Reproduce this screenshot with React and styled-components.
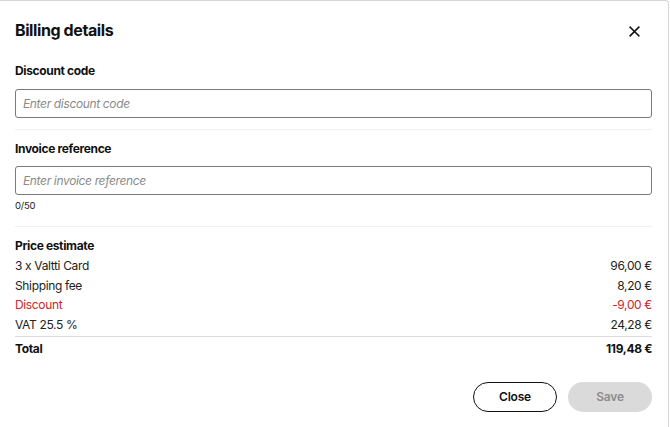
import React, { useState } from 'react';
import styled, { createGlobalStyle } from 'styled-components';

const GlobalStyle = createGlobalStyle`
    html, body {
        margin: 0;
        padding: 0;
        background: #ffffff;
    }
    body {
        font-family: Inter, "Noto Sans", sans-serif;
        color: #111111;
        letter-spacing: -0.35px;
    }
`;

const Dialog = styled.div`
    box-sizing: border-box;
    width: 669px;
    height: 427px;
    background: #ffffff;
    border-top: 1px solid #d4d4d4;
    border-right: 1px solid #d4d4d4;
    border-top-right-radius: 4px;
    padding: 19px 16px 0 15px;
    display: flex;
    flex-direction: column;
`;

const Header = styled.div`
    display: flex;
    justify-content: space-between;
    align-items: center;
    height: 20px;
`;

const Title = styled.h2`
    margin: 0;
    font-size: 16px;
    line-height: 20px;
    font-weight: 700;
    letter-spacing: -0.4px;
`;

const CloseIcon = styled.button`
    border: none;
    background: none;
    padding: 0;
    margin-right: 12px;
    margin-top: 2px;
    width: 11px;
    height: 11px;
    display: flex;
    cursor: pointer;
`;

const Field = styled.div`
    display: flex;
    flex-direction: column;
    margin-top: ${({ top }) => top}px;
`;

const Label = styled.label`
    font-size: 12px;
    line-height: 16px;
    font-weight: 700;
    margin-bottom: ${({ gap }) => gap}px;
`;

const Input = styled.input`
    box-sizing: border-box;
    width: 100%;
    height: 29px;
    border: 1px solid #7a7a7a;
    border-radius: 3px;
    padding: 0 7px;
    font-family: inherit;
    font-size: 12px;
    letter-spacing: -0.35px;
    color: #111;
    outline: none;
    &::placeholder {
        color: #8a8a8a;
        font-style: italic;
    }
`;

const Counter = styled.div`
    font-size: 9.5px;
    line-height: 14px;
    margin-top: 4px;
    letter-spacing: -0.2px;
    color: #222;
`;

const Divider = styled.hr`
    border: none;
    border-top: 1px solid ${({ strong }) => strong ? '#dcdcdc' : '#f0f0f0'};
    margin: ${({ top }) => top}px 0 0 0;
`;

const SectionTitle = styled.div`
    font-size: 12px;
    font-weight: 700;
    line-height: 16px;
    margin-top: 11px;
    margin-bottom: 2px;
`;

const Row = styled.div`
    display: flex;
    justify-content: space-between;
    font-size: 12px;
    line-height: 19.6px;
    color: ${({ red }) => red ? '#d2232a' : '#222'};
    font-weight: ${({ bold }) => bold ? 700 : 400};
`;

const TotalRow = styled(Row)`
    margin-top: 2px;
    color: #111;
`;

const Footer = styled.div`
    display: flex;
    justify-content: flex-end;
    gap: 11px;
    margin-top: 23px;
`;

const Button = styled.button`
    box-sizing: border-box;
    width: 84px;
    height: 30px;
    border-radius: 15px;
    font-family: inherit;
    font-size: 12px;
    font-weight: 600;
    letter-spacing: -0.2px;
    border: ${({ primary }) => primary ? 'none' : '1px solid #111'};
    background: ${({ primary }) => primary ? '#dadada' : '#ffffff'};
    color: ${({ primary }) => primary ? '#8c8c8c' : '#111'};
    cursor: ${({ disabled }) => disabled ? 'not-allowed' : 'pointer'};
`;

const lines = [
    { label: '3 x Valtti Card', value: '96,00 €' },
    { label: 'Shipping fee', value: '8,20 €' },
    { label: 'Discount', value: '-9,00 €', red: true },
    { label: 'VAT 25.5 %', value: '24,28 €' },
];

const App = () => {
    const [discount, setDiscount] = useState('');
    const [reference, setReference] = useState('');

    return (
        <>
            <GlobalStyle />
            <Dialog>
                <Header>
                    <Title>Billing details</Title>
                    <CloseIcon aria-label="Close">
                        <svg width="11" height="11" viewBox="0 0 11 11">
                            <path d="M1.2 1.2 L9.8 9.8 M9.8 1.2 L1.2 9.8" stroke="#111" strokeWidth="1.6" strokeLinecap="square" />
                        </svg>
                    </CloseIcon>
                </Header>

                <Field top={23}>
                    <Label gap={10}>Discount code</Label>
                    <Input
                        placeholder="Enter discount code"
                        value={discount}
                        onChange={(e) => setDiscount(e.target.value)}
                    />
                </Field>
                <Divider top={11} />

                <Field top={11}>
                    <Label gap={9}>Invoice reference</Label>
                    <Input
                        placeholder="Enter invoice reference"
                        maxLength={50}
                        value={reference}
                        onChange={(e) => setReference(e.target.value)}
                    />
                    <Counter>{reference.length}/50</Counter>
                </Field>
                <Divider top={13} />

                <SectionTitle>Price estimate</SectionTitle>
                {lines.map((line) => (
                    <Row key={line.label} red={line.red}>
                        <span>{line.label}</span>
                        <span>{line.value}</span>
                    </Row>
                ))}
                <Divider strong top={2} />
                <TotalRow bold>
                    <span>Total</span>
                    <span>119,48 €</span>
                </TotalRow>

                <Footer>
                    <Button>Close</Button>
                    <Button primary disabled>Save</Button>
                </Footer>
            </Dialog>
        </>
    );
};

export default App;
